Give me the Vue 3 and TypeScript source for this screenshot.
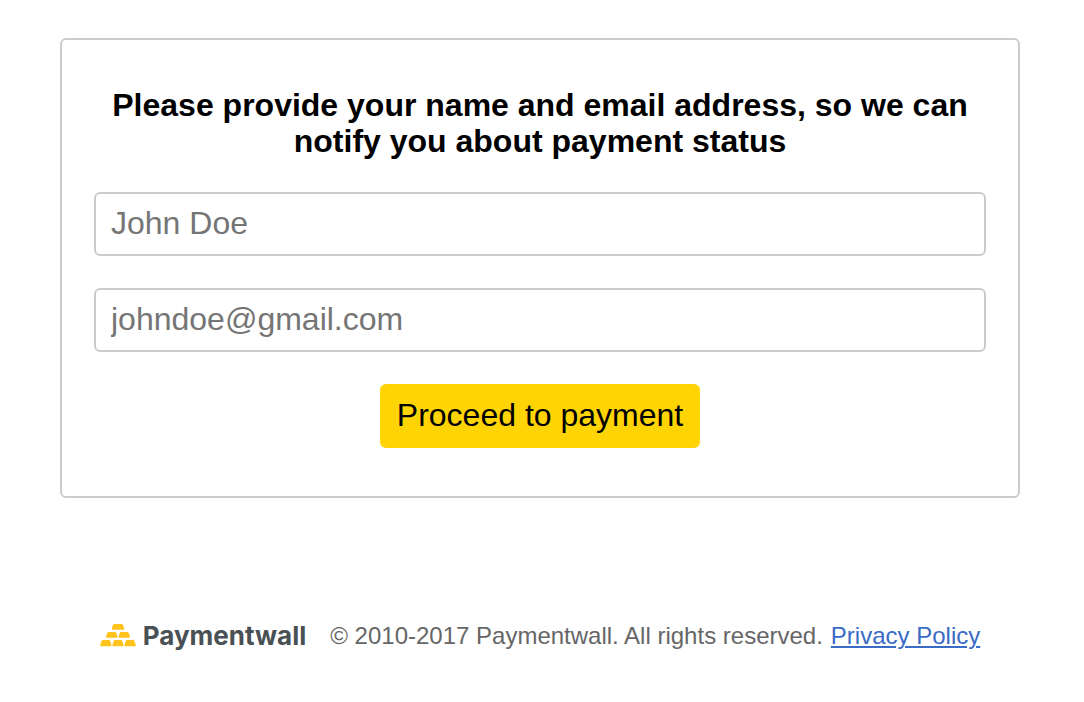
<script setup lang="ts">
import { ref } from 'vue'

const name = ref('')
const email = ref('')
</script>

<template>
  <div class="page">
    <form class="card" @submit.prevent>
      <h1 class="title">Please provide your name and email address, so we can notify you about payment status</h1>
      <input v-model="name" class="field" type="text" placeholder="John Doe" aria-label="Name" autocomplete="name" />
      <input v-model="email" class="field" type="email" placeholder="johndoe@gmail.com" aria-label="Email address" autocomplete="email" />
      <button class="submit" type="submit">Proceed to payment</button>
    </form>

    <footer class="footer">
      <div class="brand">
        <svg class="bars" viewBox="0 0 36 24" aria-hidden="true">
          <g fill="#ffc31e">
            <path d="M13 1Q13.300 0 14.300 0H21.700Q22.700 0 23 1L24.300 4.600Q24.600 5.800 23.400 5.800H12.600Q11.400 5.800 11.700 4.600Z" />
            <path d="M7.300 9Q7.600 8 8.600 8H15Q16 8 16.300 9L17.500 12.600Q17.800 13.800 16.600 13.800H7Q5.700 13.800 6 12.600Z" />
            <path d="M19.700 9Q20 8 21 8H27.400Q28.400 8 28.700 9L30 12.600Q30.300 13.800 29.100 13.800H19.400Q18.200 13.800 18.500 12.600Z" />
            <path d="M1.500 17Q1.800 16 2.800 16H9Q10 16 10.300 17L11.500 21Q11.800 22.200 10.600 22.200H1.200Q0 22.200 .3 21Z" />
            <path d="M13.600 17Q13.900 16 14.900 16H21.100Q22.100 16 22.400 17L23.600 21Q23.900 22.200 22.700 22.200H13.300Q12.100 22.200 12.400 21Z" />
            <path d="M25.700 17Q26 16 27 16H33.200Q34.200 16 34.500 17L35.700 21Q36 22.200 34.800 22.200H25.400Q24.200 22.200 24.500 21Z" />
          </g>
        </svg>
        <span class="wordmark">Paymentwall</span>
      </div>
      <p class="legal">© 2010-2017 Paymentwall. All rights reserved.</p>
      <a class="privacy" href="#privacy">Privacy Policy</a>
    </footer>
  </div>
</template>

<style>
body {
  background: #fff;
}
</style>

<style scoped>
.page {
  padding: 38px 64px 48px 60px;
  font-family: "Liberation Sans", Arial, sans-serif;
}

.card {
  display: flex;
  flex-direction: column;
  align-items: center;
  gap: 32px;
  padding: 47px 32px 48px;
  border: 2px solid #ccc;
  border-radius: 6px;
}

.title {
  margin: 0;
  padding: 0 16px 1px;
  font-size: 32px;
  line-height: 36px;
  font-weight: 700;
  text-align: center;
  color: #000;
}

.field {
  box-sizing: border-box;
  width: 100%;
  height: 64px;
  margin: 0;
  padding: 0 15px 2px;
  border: 2px solid #ccc;
  border-radius: 6px;
  background: #fff;
  font: inherit;
  font-size: 32px;
  color: #000;
}

.field::placeholder {
  color: #757575;
  opacity: 1;
}

.submit {
  height: 64px;
  padding: 0 17px 2px;
  border: 0;
  border-radius: 6px;
  background: #ffd405;
  font: inherit;
  font-size: 32px;
  color: #000;
  white-space: nowrap;
  cursor: pointer;
}

.footer {
  display: flex;
  justify-content: center;
  align-items: center;
  margin-top: 120px;
  font-size: 24px;
  line-height: 36px;
  white-space: nowrap;
}

.brand {
  display: flex;
  align-items: center;
  gap: 7px;
  margin-right: 24px;
}

.bars {
  width: 36px;
  height: 24px;
}

.wordmark {
  font-family: Inter, "Open Sans", sans-serif;
  font-size: 26px;
  font-weight: 700;
  color: #4a5155;
}

.legal {
  margin: 0 8px 0 0;
  color: #666;
}

.privacy {
  color: #3a6bc5;
  text-decoration: underline;
  text-decoration-thickness: 2px;
  text-underline-offset: 2px;
}
</style>
